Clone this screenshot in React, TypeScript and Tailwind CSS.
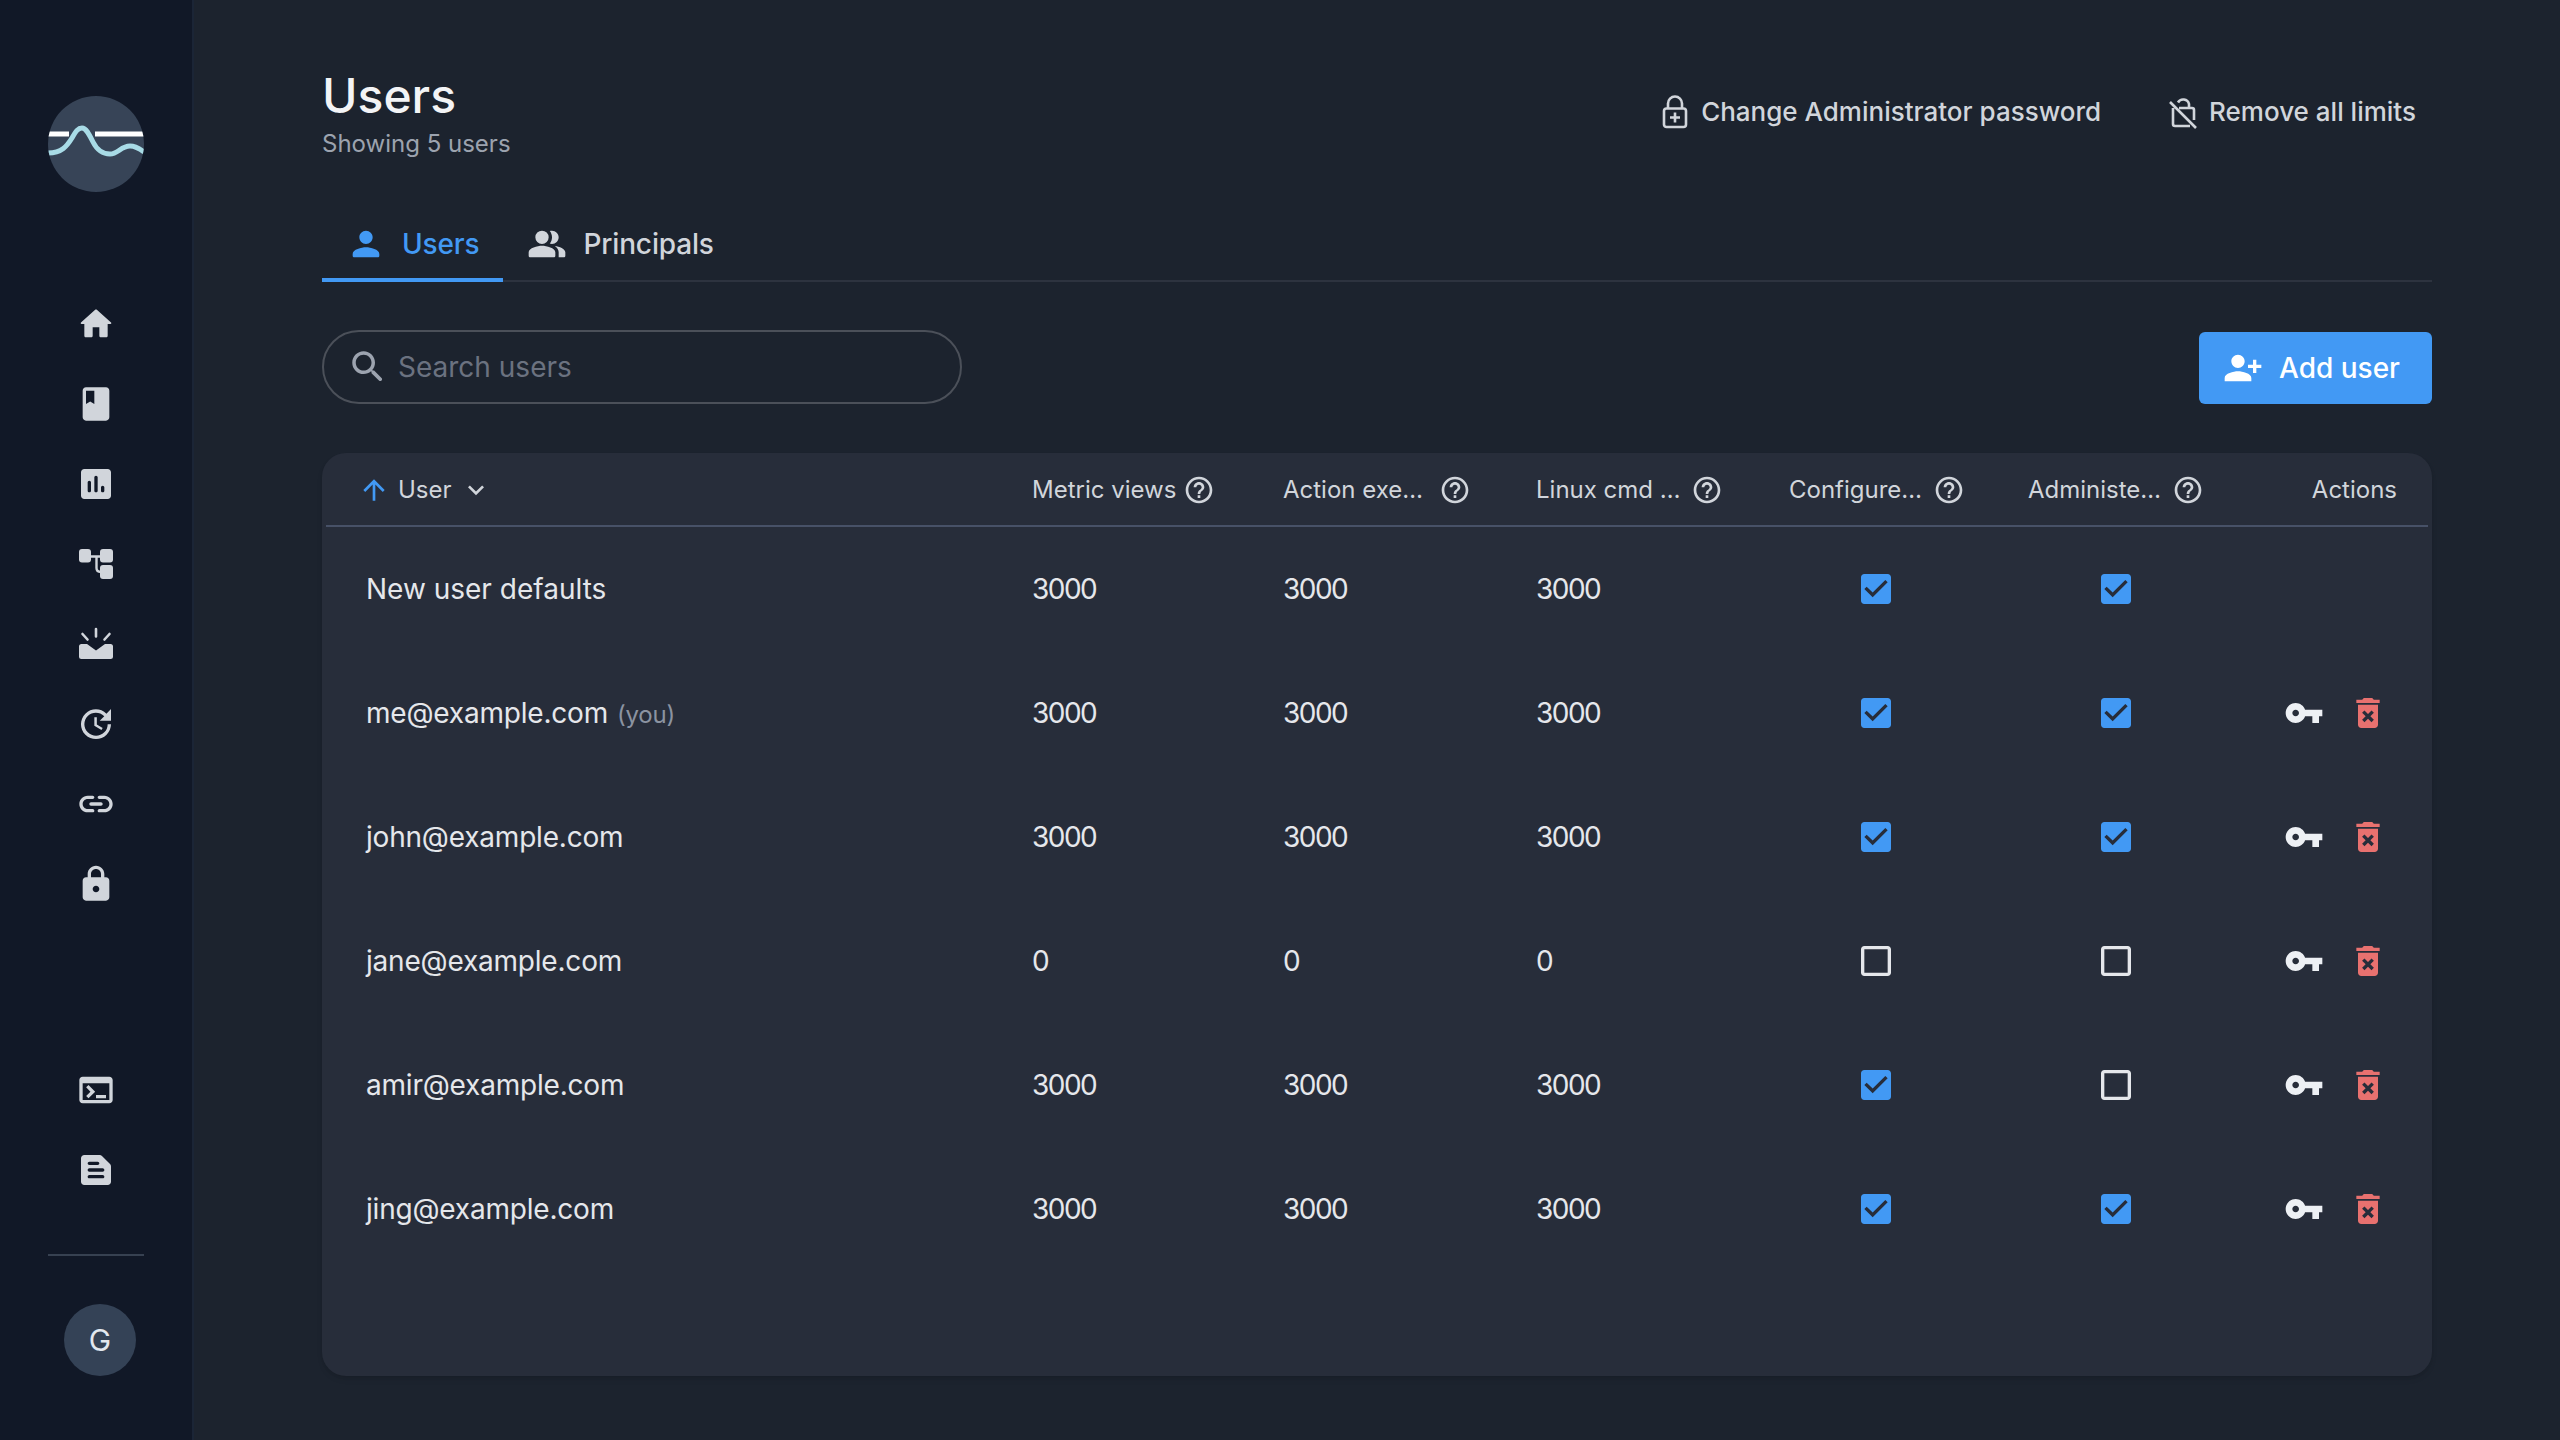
import React from 'react';

const paths = {
  home: 'M10 19v-5h4v5c0 .55.45 1 1 1h3c.55 0 1-.45 1-1v-7h1.7c.46 0 .68-.57.33-.87L12.67 3.6c-.38-.34-.96-.34-1.34 0l-8.36 7.53c-.34.3-.13.87.33.87H5v7c0 .55.45 1 1 1h3c.55 0 1-.45 1-1z',
  book: 'M18 2H6c-1.1 0-2 .9-2 2v16c0 1.1.9 2 2 2h12c1.1 0 2-.9 2-2V4c0-1.1-.9-2-2-2zM6 4h5v8l-2.5-1.5L6 12V4z',
  chart: 'M19 3H5c-1.1 0-2 .9-2 2v14c0 1.1.9 2 2 2h14c1.1 0 2-.9 2-2V5c0-1.1-.9-2-2-2zM8 17c-.55 0-1-.45-1-1v-5c0-.55.45-1 1-1s1 .45 1 1v5c0 .55-.45 1-1 1zm4 0c-.55 0-1-.45-1-1V8c0-.55.45-1 1-1s1 .45 1 1v8c0 .55-.45 1-1 1zm4 0c-.55 0-1-.45-1-1v-2c0-.55.45-1 1-1s1 .45 1 1v2c0 .55-.45 1-1 1z',
  update: 'M21 10.12h-6.78l2.74-2.82c-2.73-2.7-7.15-2.8-9.88-.1-2.73 2.71-2.73 7.08 0 9.79s7.15 2.71 9.88 0C18.32 15.65 19 14.08 19 12.1h2c0 1.98-.88 4.55-2.64 6.29-3.51 3.48-9.21 3.48-12.72 0-3.5-3.47-3.53-9.11-.02-12.58s9.14-3.47 12.65 0L21 3v7.12zM12.5 8v4.25l3.5 2.08-.72 1.21L11 13V8h1.5z',
  link: 'M17 7h-3c-.55 0-1 .45-1 1s.45 1 1 1h3c1.65 0 3 1.35 3 3s-1.35 3-3 3h-3c-.55 0-1 .45-1 1s.45 1 1 1h3c2.76 0 5-2.24 5-5s-2.24-5-5-5zm-9 5c0 .55.45 1 1 1h6c.55 0 1-.45 1-1s-.45-1-1-1H9c-.55 0-1 .45-1 1zm2 3H7c-1.65 0-3-1.35-3-3s1.35-3 3-3h3c.55 0 1-.45 1-1s-.45-1-1-1H7c-2.76 0-5 2.24-5 5s2.24 5 5 5h3c.55 0 1-.45 1-1s-.45-1-1-1z',
  lock: 'M18 8h-1V6c0-2.76-2.24-5-5-5S7 3.24 7 6v2H6c-1.1 0-2 .9-2 2v10c0 1.1.9 2 2 2h12c1.1 0 2-.9 2-2V10c0-1.1-.9-2-2-2zm-6 9c-1.1 0-2-.9-2-2s.9-2 2-2 2 .9 2 2-.9 2-2 2zM9 8V6c0-1.66 1.34-3 3-3s3 1.34 3 3v2H9z',
  terminal: 'M20 4H4c-1.11 0-2 .9-2 2v12c0 1.1.89 2 2 2h16c1.1 0 2-.9 2-2V6c0-1.1-.9-2-2-2zm0 14H4V8h16v10zm-2-1h-6v-2h6v2zM7.5 17l-1.41-1.41L8.67 13l-2.59-2.59L7.5 9l4 4-4 4z',
  snippet: 'M14.17 3H5c-1.1 0-2 .9-2 2v14c0 1.1.9 2 2 2h14c1.1 0 2-.9 2-2V9.83c0-.53-.21-1.04-.59-1.41l-4.83-4.83c-.37-.38-.88-.59-1.41-.59zM8 15h8c.55 0 1 .45 1 1s-.45 1-1 1H8c-.55 0-1-.45-1-1s.45-1 1-1zm0-4h8c.55 0 1 .45 1 1s-.45 1-1 1H8c-.55 0-1-.45-1-1s.45-1 1-1zm0-4h5c.55 0 1 .45 1 1s-.45 1-1 1H8c-.55 0-1-.45-1-1s.45-1 1-1z',
  person: 'M12 12c2.21 0 4-1.79 4-4s-1.79-4-4-4-4 1.79-4 4 1.79 4 4 4zm0 2c-2.67 0-8 1.34-8 4v1c0 .55.45 1 1 1h14c.55 0 1-.45 1-1v-1c0-2.66-5.33-4-8-4z',
  people: 'M16.67 13.13C18.04 14.06 19 15.32 19 17v3h3c.55 0 1-.45 1-1v-2c0-2.18-3.57-3.47-6.33-3.87zM9 12a4 4 0 1 0 0-8 4 4 0 0 0 0 8zM15 12c2.21 0 4-1.79 4-4s-1.79-4-4-4c-.47 0-.91.1-1.33.24C14.5 5.27 15 6.58 15 8s-.5 2.73-1.33 3.76c.42.14.86.24 1.33.24zM9 13c-2.67 0-8 1.34-8 4v2c0 .55.45 1 1 1h14c.55 0 1-.45 1-1v-2c0-2.66-5.33-4-8-4z',
  search: 'M15.5 14h-.79l-.28-.27C15.41 12.59 16 11.11 16 9.5 16 5.91 13.09 3 9.5 3S3 5.91 3 9.5 5.91 16 9.5 16c1.61 0 3.09-.59 4.23-1.57l.27.28v.79l4.25 4.24c.41.41 1.08.41 1.49 0 .41-.41.41-1.08 0-1.49L15.5 14zm-6 0C7.01 14 5 11.99 5 9.5S7.01 5 9.5 5 14 7.01 14 9.5 11.99 14 9.5 14z',
  help: 'M11 18h2v-2h-2v2zm1-16C6.48 2 2 6.48 2 12s4.48 10 10 10 10-4.48 10-10S17.52 2 12 2zm0 18c-4.41 0-8-3.59-8-8s3.59-8 8-8 8 3.59 8 8-3.59 8-8 8zm0-14c-2.21 0-4 1.79-4 4h2c0-1.1.9-2 2-2s2 .9 2 2c0 2-3 1.75-3 5h2c0-2.25 3-2.5 3-5 0-2.21-1.79-4-4-4z',
  addUser: 'M13 8c0-2.21-1.79-4-4-4S5 5.79 5 8s1.79 4 4 4 4-1.79 4-4zm2 2v2h3v3h2v-3h3v-2h-3V7h-2v3h-3zM1 18v2h16v-2c0-2.66-5.33-4-8-4s-8 1.34-8 4z',
  key: 'M12.65 10C11.83 7.67 9.61 6 7 6c-3.31 0-6 2.69-6 6s2.69 6 6 6c2.61 0 4.83-1.67 5.65-4H17v4h4v-4h2v-4H12.65zM7 14c-1.1 0-2-.9-2-2s.9-2 2-2 2 .9 2 2-.9 2-2 2z',
  trash: 'M6 19c0 1.1.9 2 2 2h8c1.1 0 2-.9 2-2V7H6v12zm2.46-7.12l1.41-1.41L12 12.59l2.12-2.12 1.41 1.41L13.41 14l2.12 2.12-1.41 1.41L12 15.41l-2.12 2.12-1.41-1.41L10.59 14l-2.13-2.12zM15.5 4l-1-1h-5l-1 1H5v2h14V4z',
  checked: 'M19 3H5c-1.11 0-2 .9-2 2v14c0 1.1.89 2 2 2h14c1.1 0 2-.9 2-2V5c0-1.1-.9-2-2-2zm-9 14l-5-5 1.41-1.41L10 14.17l7.59-7.59L19 8l-9 9z',
  unchecked: 'M19 5v14H5V5h14m0-2H5c-1.1 0-2 .9-2 2v14c0 1.1.9 2 2 2h14c1.1 0 2-.9 2-2V5c0-1.1-.9-2-2-2z',
  arrowUp: 'M4 12l1.41 1.41L11 7.83V20h2V7.83l5.58 5.59L20 12l-8-8-8 8z',
  chevron: 'M7.41 8.59 12 13.17l4.59-4.58L18 10l-6 6-6-6 1.41-1.41z',
};

function Icon({ name, className }: { name: keyof typeof paths; className: string }) {
  return (
    <svg viewBox="0 0 24 24" fill="currentColor" className={`shrink-0 ${className}`}>
      <path d={paths[name]} />
    </svg>
  );
}

function Logo() {
  return (
    <div className="w-[96px] h-[96px] rounded-full bg-[#374457] overflow-hidden shrink-0">
      <svg viewBox="0 0 96 96" className="w-full h-full" fill="none">
        <path d="M0 38H21M47 38H96" stroke="#ffffff" strokeWidth="5" />
        <path
          d="M0 57C14 57 19 50 24 42C28 35 30 32 34 32C38 32 41 38 45 46C49 54 55 58 62 58C70 58 73 50 82 50C87 50 92 53 96 56"
          stroke="#a8dbe6"
          strokeWidth="5"
        />
      </svg>
    </div>
  );
}

function NodesIcon() {
  return (
    <svg viewBox="0 0 40 40" className="w-[40px] h-[40px]" fill="currentColor">
      <rect x="3" y="5" width="12" height="13.5" rx="3" />
      <rect x="24" y="5" width="13" height="13.5" rx="3" />
      <rect x="24" y="21" width="13" height="14" rx="3" />
      <path d="M14 12.5H25M20.5 12.5V24Q20.5 28 25 28" fill="none" stroke="currentColor" strokeWidth="2.4" />
    </svg>
  );
}

function AlertIcon() {
  return (
    <svg viewBox="0 0 40 40" className="w-[40px] h-[40px]" fill="currentColor">
      <path d="M3 22.5Q3 20 5.5 20H11L20 26.5L29 20H34.5Q37 20 37 22.5V32.5Q37 35 34.5 35H5.5Q3 35 3 32.5Z" />
      <path d="M20 5V12.5M6.5 10L11.5 15.5M33.5 10L28.5 15.5" fill="none" stroke="currentColor" strokeWidth="2.6" strokeLinecap="round" />
    </svg>
  );
}

function LockPlusIcon() {
  return (
    <svg viewBox="0 0 26 34" className="w-[26px] h-[34px] shrink-0" fill="none" stroke="currentColor" strokeWidth="2.6">
      <rect x="2" y="13.5" width="22" height="18.5" rx="2.5" />
      <path d="M6 13.5V8.5a7 7 0 0 1 14 0v5M13 17.5v10M8 22.5h10" />
    </svg>
  );
}

function LockSlashIcon() {
  return (
    <svg viewBox="0 0 28 36" className="w-[28px] h-[36px] shrink-0" fill="none" stroke="currentColor" strokeWidth="2.6">
      <path d="M1 8L27 34M10 14H23Q25 14 25 16V26M21 32H6Q4 32 4 30V14M9 8.5A6 6 0 0 1 20 10V14" />
    </svg>
  );
}

const columns = 'grid grid-cols-[706px_251px_253px_253px_239px_237px_163px]';

const users = [
  { name: 'New user defaults', metrics: 3000, actions: 3000, cmd: 3000, configure: true, admin: true, isDefaults: true },
  { name: 'me@example.com', you: true, metrics: 3000, actions: 3000, cmd: 3000, configure: true, admin: true },
  { name: 'john@example.com', metrics: 3000, actions: 3000, cmd: 3000, configure: true, admin: true },
  { name: 'jane@example.com', metrics: 0, actions: 0, cmd: 0, configure: false, admin: false },
  { name: 'amir@example.com', metrics: 3000, actions: 3000, cmd: 3000, configure: true, admin: false },
  { name: 'jing@example.com', metrics: 3000, actions: 3000, cmd: 3000, configure: true, admin: true },
];

function Check({ on }: { on: boolean }) {
  return <Icon name={on ? 'checked' : 'unchecked'} className={`w-[40px] h-[40px] ${on ? 'text-[#4299f4]' : 'text-[#e5e7eb]'}`} />;
}

function HeaderCell({ label, width }: { label: string; width: string }) {
  return (
    <div className="flex items-center">
      <span className={`whitespace-nowrap ${width}`}>{label}</span>
      <Icon name="help" className="w-[32px] h-[32px]" />
    </div>
  );
}

export default function App() {
  return (
    <div className="flex w-full h-screen bg-[#1c232e] font-[Inter,sans-serif] overflow-hidden">
      {/* Sidebar */}
      <aside className="w-[194px] shrink-0 h-full bg-[#111827] border-r-2 border-[#1b2536] flex flex-col items-center pt-[96px] pb-[64px] text-[#d1d5db]">
        <Logo />
        <nav className="mt-[92px] flex flex-col items-center">
          <div className="h-[80px] flex items-center"><Icon name="home" className="w-[40px] h-[40px]" /></div>
          <div className="h-[80px] flex items-center"><Icon name="book" className="w-[40px] h-[40px]" /></div>
          <div className="h-[80px] flex items-center"><Icon name="chart" className="w-[40px] h-[40px]" /></div>
          <div className="h-[80px] flex items-center"><NodesIcon /></div>
          <div className="h-[80px] flex items-center"><AlertIcon /></div>
          <div className="h-[80px] flex items-center"><Icon name="update" className="w-[40px] h-[40px]" /></div>
          <div className="h-[80px] flex items-center"><Icon name="link" className="w-[40px] h-[40px]" /></div>
          <div className="h-[80px] flex items-center"><Icon name="lock" className="w-[40px] h-[40px]" /></div>
        </nav>
        <div className="mt-auto flex flex-col items-center">
          <div className="h-[80px] flex items-center"><Icon name="terminal" className="w-[40px] h-[40px]" /></div>
          <div className="h-[80px] flex items-center"><Icon name="snippet" className="w-[40px] h-[40px]" /></div>
          <div className="w-[96px] h-[2px] bg-[#374151] mt-[44px]" />
          <div className="w-[72px] h-[72px] rounded-full bg-[#344256] mt-[48px] ml-[8px] flex items-center justify-center text-[30px] text-[#e2e8f0]">
            G
          </div>
        </div>
      </aside>

      {/* Main */}
      <main className="flex-1 min-w-0 px-[128px] pt-[68px]">
        <div className="flex items-start justify-between">
          <div>
            <h1 className="text-[48px] leading-[56px] font-medium text-[#f3f4f6]">Users</h1>
            <p className="text-[24px] leading-[32px] text-[#9ca3af] mt-[4px]">Showing 5 users</p>
          </div>
          <div className="flex items-center mt-[24px] pr-[16px] text-[26px] font-medium text-[#d1d5db]">
            <LockPlusIcon />
            <span className="ml-[13px] mr-[68px]">Change Administrator password</span>
            <LockSlashIcon />
            <span className="ml-[12px]">Remove all limits</span>
          </div>
        </div>

        {/* Tabs */}
        <div className="mt-[50px] flex border-b-2 border-[#2d333f]">
          <div className="flex items-center gap-[16px] px-[24px] h-[72px] -mb-[2px] border-b-4 border-[#4299f4] text-[#4299f4] text-[28px] font-medium tracking-[-0.15px]">
            <Icon name="person" className="w-[40px] h-[40px]" />
            <span>Users</span>
          </div>
          <div className="flex items-center gap-[16px] px-[24px] h-[72px] -mb-[2px] border-b-4 border-transparent text-[#d1d5db] text-[28px] font-medium tracking-[-0.15px]">
            <Icon name="people" className="w-[40px] h-[40px]" />
            <span>Principals</span>
          </div>
        </div>

        {/* Search and add */}
        <div className="mt-[48px] flex items-end justify-between">
          <div className="w-[640px] h-[74px] rounded-full border-2 border-[#4b5059] flex items-center pl-[23px]">
            <Icon name="search" className="w-[42px] h-[42px] text-[#9ca3af]" />
            <span className="ml-[9px] text-[28px] text-[#6b7280]">Search users</span>
          </div>
          <button className="w-[233px] h-[72px] rounded-[6px] bg-[#4299f4] flex items-center pl-[24px] text-white text-[28px] font-medium">
            <Icon name="addUser" className="w-[40px] h-[40px]" />
            <span className="ml-[16px]">Add user</span>
          </button>
        </div>

        {/* Table */}
        <div className="mt-[49px] h-[923px] rounded-[24px] bg-[#272d3a] px-[4px] shadow-md">
          <div className={`${columns} h-[74px] pt-[2px] border-b-2 border-[#475167] items-center text-[24px] text-[#d1d5db]`}>
            <div className="flex items-center pl-[32px]">
              <Icon name="arrowUp" className="w-[32px] h-[32px] text-[#4299f4]" />
              <span className="ml-[8px]">User</span>
              <Icon name="chevron" className="w-[32px] h-[32px] ml-[8px]" />
            </div>
            <HeaderCell label="Metric views" width="w-[151px]" />
            <HeaderCell label="Action exe…" width="w-[156px]" />
            <HeaderCell label="Linux cmd …" width="w-[155px]" />
            <HeaderCell label="Configure…" width="w-[144px]" />
            <HeaderCell label="Administe…" width="w-[144px]" />
            <div className="text-right pr-[31px]">Actions</div>
          </div>
          {users.map((u) => (
            <div key={u.name} className={`${columns} h-[124px] items-center text-[28px] text-[#e5e7eb]`}>
              <div className={`pl-[40px] ${u.isDefaults ? '' : 'tracking-[-0.2px]'}`}>
                {u.name}
                {u.you && <span className="ml-[9px] text-[24px] text-[#8b93a1]">(you)</span>}
              </div>
              <div className="tracking-[-1.5px]">{u.metrics}</div>
              <div className="tracking-[-1.5px]">{u.actions}</div>
              <div className="tracking-[-1.5px]">{u.cmd}</div>
              <div className="pl-[67px]"><Check on={u.configure} /></div>
              <div className="pl-[68px]"><Check on={u.admin} /></div>
              <div className="flex justify-end items-center gap-[24px] pr-[40px]">
                {!u.isDefaults && (
                  <>
                    <Icon name="key" className="w-[40px] h-[40px] text-[#edf0f4]" />
                    <Icon name="trash" className="w-[40px] h-[40px] text-[#e8716f]" />
                  </>
                )}
              </div>
            </div>
          ))}
        </div>
      </main>
    </div>
  );
}
